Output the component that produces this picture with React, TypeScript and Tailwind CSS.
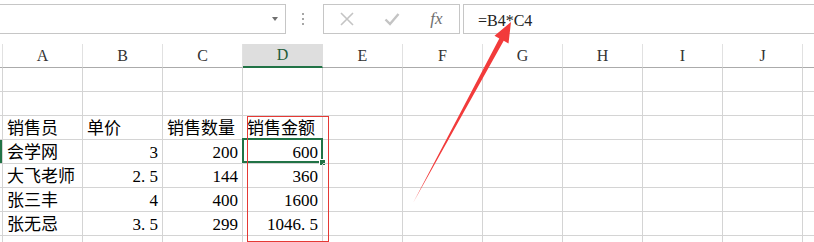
import React from 'react'

const cols = ['A', 'B', 'C', 'D', 'E', 'F', 'G', 'H', 'I', 'J', '']

type Cell = { v: string; num?: boolean }

// rows 1..8, only columns A..D hold data
const rows: Cell[][] = [
    [],
    [],
    [{ v: '销售员' }, { v: '单价' }, { v: '销售数量' }, { v: '销售金额' }],
    [{ v: '会学网' }, { v: '3', num: true }, { v: '200', num: true }, { v: '600', num: true }],
    [{ v: '大飞老师' }, { v: '2.5', num: true }, { v: '144', num: true }, { v: '360', num: true }],
    [{ v: '张三丰' }, { v: '4', num: true }, { v: '400', num: true }, { v: '1600', num: true }],
    [{ v: '张无忌' }, { v: '3.5', num: true }, { v: '299', num: true }, { v: '1046.5', num: true }],
    [],
]

const cjk = "font-['Liberation_Serif','Noto_Sans_CJK_SC',serif]"

// SimSun style: the period is as wide as a digit
function NumText({ v }: { v: string }) {
    return (
        <>
            {v.split('').map((ch, i) =>
                ch === '.' ? (
                    <span key={i} className="inline-block w-[0.5em] text-left">.</span>
                ) : (
                    <span key={i}>{ch}</span>
                )
            )}
        </>
    )
}

function FormulaBar() {
    return (
        <div className="flex h-[44px] items-start pt-[4px]">
            {/* 名称框 */}
            <div className="relative flex h-[30px] w-[286px] items-center justify-end border-y border-r border-[#c6c6c6] pr-[7px]">
                <div className="h-0 w-0 border-x-[3px] border-t-[4px] border-x-transparent border-t-[#707070]" />
            </div>
            <div className="ml-[15px] flex h-[30px] w-[4px] flex-col items-center justify-center gap-[3px]">
                <div className="h-[2px] w-[2px] bg-[#a6a6a6]" />
                <div className="h-[2px] w-[2px] bg-[#a6a6a6]" />
                <div className="h-[2px] w-[2px] bg-[#a6a6a6]" />
            </div>
            <div className="ml-[18px] flex h-[30px] w-[137px] border border-[#c6c6c6]">
                <div className="flex w-[45px] items-center justify-center">
                    <svg width="14" height="14" viewBox="0 0 14 14">
                        <path d="M1 1 L13 13 M13 1 L1 13" stroke="#c4c4c4" strokeWidth="1.6" fill="none" />
                    </svg>
                </div>
                <div className="flex w-[45px] items-center justify-center">
                    <svg width="16" height="14" viewBox="0 0 16 14">
                        <path d="M1.5 7.5 L6 12 L14.5 2" stroke="#c4c4c4" strokeWidth="2.4" fill="none" />
                    </svg>
                </div>
                <div className="flex w-[45px] items-center justify-center font-['Liberation_Serif',serif] text-[17px] italic text-[#6e6e6e]">
                    fx
                </div>
            </div>
            {/* 编辑栏 */}
            <div className="ml-[3px] -mr-[4px] flex h-[30px] flex-1 items-center border border-[#c6c6c6] pl-[14px] pt-[3px] font-['Liberation_Serif',serif] text-[16px] text-[#222]">
                =B4*C4
            </div>
        </div>
    )
}

function Grid() {
    return (
        <div className="grid grid-cols-[3px_repeat(11,80px)]">
            {/* 列标题 */}
            <div className="h-[24px] border-b border-r border-b-[#ababab] border-r-[#e1e1e1]" />
            {cols.map((c) => (
                <div
                    key={c || 'K'}
                    className={`flex h-[24px] items-center justify-center border-r font-['Liberation_Serif',serif] text-[16px] ${
                        c === 'D'
                            ? 'border-b-2 border-b-[#217346] border-r-[#dedede] bg-[#dedede] text-[#1f5c3a]'
                            : 'border-b border-b-[#ababab] border-r-[#e1e1e1] text-[#333]'
                    }`}
                >
                    {c}
                </div>
            ))}

            {rows.map((row, r) => (
                <React.Fragment key={r}>
                    <div
                        className={`h-[24px] border-b border-r border-[#d4d4d4] ${r === 3 ? 'bg-[#217346]' : ''}`}
                    />
                    {cols.map((c, ci) => {
                        const cell = row[ci]
                        const selected = r === 3 && ci === 3
                        return (
                            <div
                                key={ci}
                                className={`relative flex h-[24px] items-center border-b border-r border-[#d4d4d4] px-[4px] pt-[1px] text-[17px] leading-none text-black ${cjk} ${
                                    cell?.num ? 'justify-end' : 'justify-start'
                                }`}
                            >
                                {cell && (cell.num ? <NumText v={cell.v} /> : cell.v)}
                                {selected && (
                                    <>
                                        <div className="absolute -left-[1px] -right-[1px] -top-[2px] bottom-0 border-2 border-[#217346]" />
                                        <div className="absolute -bottom-[3px] -right-[4px] h-[7px] w-[7px] border border-white bg-[#217346]" />
                                    </>
                                )}
                            </div>
                        )
                    })}
                </React.Fragment>
            ))}
        </div>
    )
}

export default function App() {
    return (
        <div className="relative h-[242px] w-[814px] overflow-hidden bg-white">
            <FormulaBar />
            <Grid />

            {/* 红色标注框 */}
            <div className="pointer-events-none absolute left-[247px] top-[116px] h-[126px] w-[82px] border border-[#e53935]" />

            {/* 红色箭头 */}
            <svg className="pointer-events-none absolute left-0 top-0" width="814" height="242">
                <polygon
                    points="413,203 499.3,38.4 494.5,35.8 511,22 508.5,43.4 503.7,40.8"
                    fill="#f23b3b"
                />
            </svg>
        </div>
    )
}
